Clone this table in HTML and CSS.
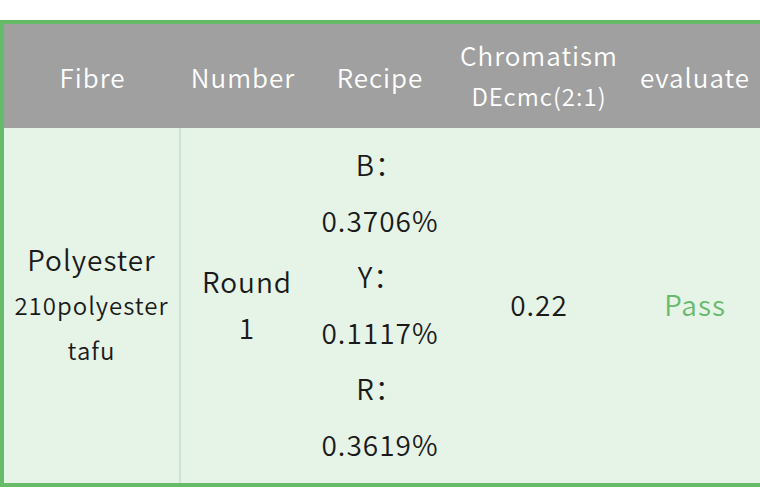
FILE: index.html
```html
<!DOCTYPE html>
<html>
<head>
<meta charset="utf-8">
<link rel="stylesheet" href="styles.css">
</head>
<body>
<div class="wrap">
<table class="grid">
  <colgroup>
    <col class="c1"><col class="c2"><col class="c3"><col class="c4"><col class="c5">
  </colgroup>
  <thead>
    <tr>
      <th>Fibre</th>
      <th>Number</th>
      <th>Recipe</th>
      <th><div class="h-main">Chromatism</div><div class="h-sub">DEcmc(2:1)</div></th>
      <th>evaluate</th>
    </tr>
  </thead>
  <tbody>
    <tr>
      <td class="fibre"><div class="f-main">Polyester</div><div class="f-sub">210polyester</div><div class="f-sub">tafu</div></td>
      <td class="num">Round<br>1</td>
      <td class="recipe"><div>B：</div><div>0.3706%</div><div>Y：</div><div>0.1117%</div><div>R：</div><div>0.3619%</div></td>
      <td class="val">0.22</td>
      <td class="val pass">Pass</td>
    </tr>
  </tbody>
</table>
</div>
</body>
</html>
```
FILE: styles.css
```css
html, body {
  margin: 0;
  padding: 0;
  overflow: hidden;
  background: #ffffff;
}
.wrap {
  padding-top: 20px;
  width: 760px;
  overflow: hidden;
}
.grid {
  table-layout: fixed;
  border-collapse: separate;
  border-spacing: 0;
  width: 771px;
  border: 4px solid #66bb6a;
  font-family: "Noto Sans CJK SC", "Noto Sans", sans-serif;
  font-weight: 350;
}
.c1 { width: 177px; }
.c2 { width: 124px; }
.c3 { width: 150px; }
.c4 { width: 168px; }
.c5 { width: 144px; }
th {
  background: #a0a0a0;
  color: #ffffff;
  font-weight: 350;
  font-size: 26px;
  height: 104px;
  padding: 0;
  text-align: center;
  vertical-align: middle;
  letter-spacing: 1px;
}
.h-main { line-height: 40px; }
.h-sub { font-size: 24px; line-height: 42px; }
td {
  background: #e6f4e8;
  color: #1a1a1a;
  font-size: 28px;
  text-align: center;
  vertical-align: middle;
  padding: 8px 0 11px;
  letter-spacing: 1px;
}
.fibre { border-right: 2px solid #cde5d0; }
.f-main { line-height: 46px; }
.f-sub { font-size: 24px; line-height: 45px; }
.num { line-height: 46px; padding-left: 8px; }
.recipe div { line-height: 56px; }
.pass { color: #66bb6a; }
```
